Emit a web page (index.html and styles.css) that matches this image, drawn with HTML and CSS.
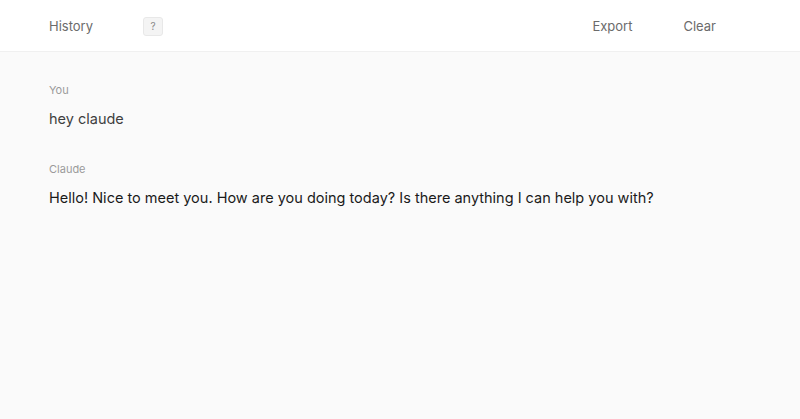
FILE: index.html
```html
<!DOCTYPE html>
<html>
<head>
<meta charset="utf-8">
<link rel="stylesheet" href="styles.css">
</head>
<body>
<header class="topbar">
  <div class="left">
    <span class="nav-item">History</span>
    <span class="badge">?</span>
  </div>
  <div class="right">
    <span class="nav-item">Export</span>
    <span class="nav-item">Clear</span>
  </div>
</header>
<main class="chat">
  <section class="msg">
    <div class="who">You</div>
    <div class="text user">hey claude</div>
  </section>
  <section class="msg">
    <div class="who">Claude</div>
    <div class="text bot">Hello! Nice to meet you. How are you doing today? Is there anything I can help you with?</div>
  </section>
</main>
</body>
</html>
```
FILE: styles.css
```css
html, body {
  margin: 0;
  padding: 0;
  height: 100%;
}
body {
  background: #fafafa;
  font-family: Inter, "Liberation Sans", sans-serif;
}
.topbar {
  box-sizing: border-box;
  height: 52px;
  padding: 1px 84px 0 49px;
  background: #ffffff;
  border-bottom: 1px solid #f0f0f0;
  display: flex;
  align-items: center;
  justify-content: space-between;
}
.left, .right {
  display: flex;
  align-items: center;
}
.left { gap: 50px; }
.right { gap: 51px; }
.nav-item {
  font-size: 13px;
  color: #6b6b6b;
}
.badge {
  box-sizing: border-box;
  width: 20px;
  height: 19px;
  border: 1px solid #e8e8e8;
  background: #f4f4f4;
  border-radius: 3px;
  font-size: 10px;
  color: #8a8a8a;
  display: flex;
  align-items: center;
  justify-content: center;
}
.chat {
  padding: 31px 49px;
  display: flex;
  flex-direction: column;
  gap: 33px;
}
.who {
  font-size: 11px;
  line-height: 14px;
  color: #9a9a9a;
  margin-bottom: 12px;
}
.text {
  font-size: 14.5px;
  line-height: 20px;
}
.user { color: #3f3f3f; }
.bot { color: #1a1a1a; }
```
